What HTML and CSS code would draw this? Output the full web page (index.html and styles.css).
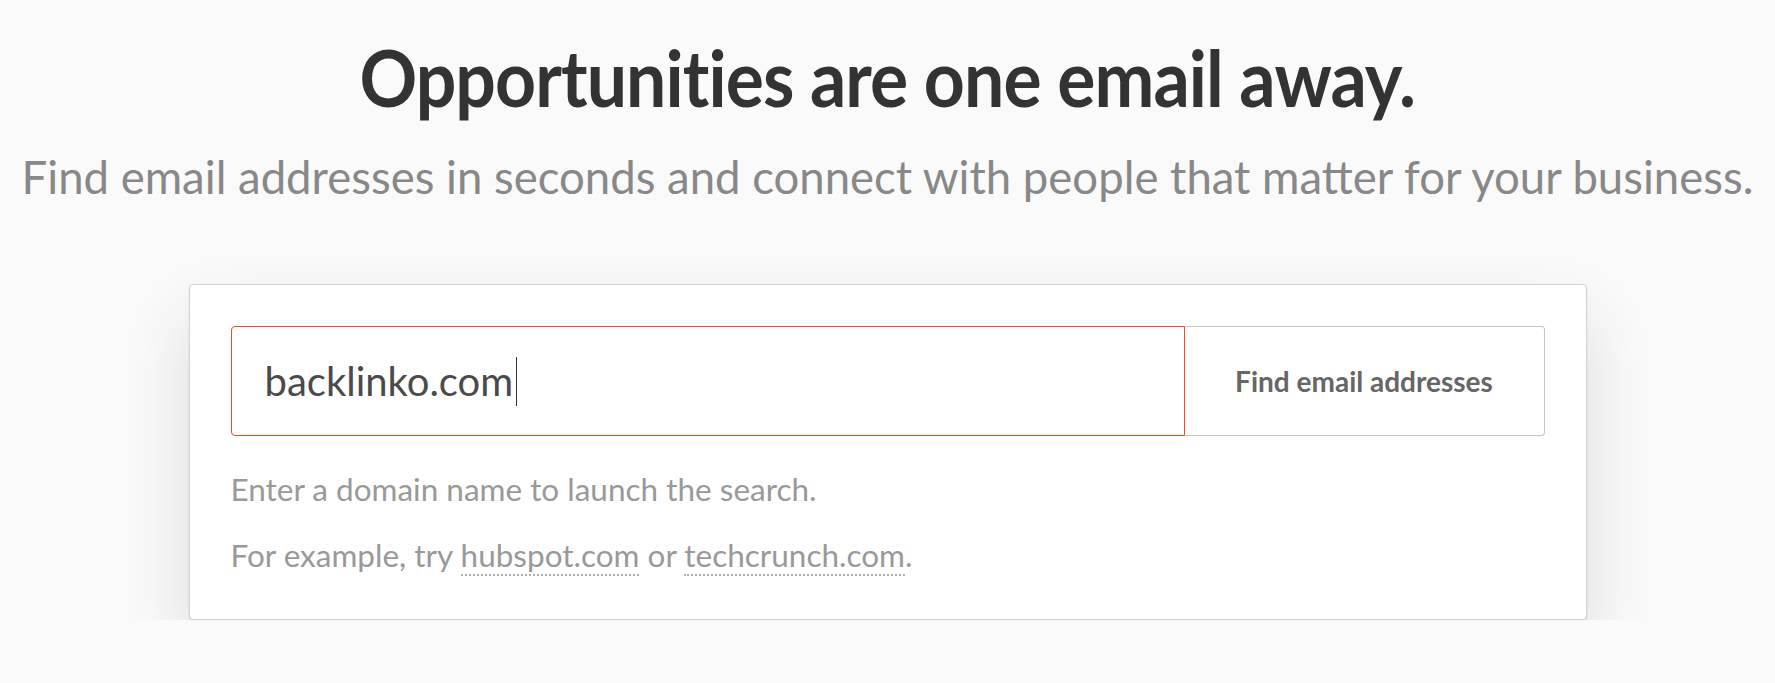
FILE: index.html
```html
<!DOCTYPE html>
<html lang="en">
<head>
<meta charset="utf-8">
<title>Find email addresses</title>
<link rel="stylesheet" href="styles.css">
</head>
<body>
<main class="hero">
  <h1 class="hero-title">Opportunities are one email away.</h1>
  <p class="hero-sub">Find email addresses in seconds and connect with people that matter for your business.</p>
  <section class="search-card">
    <form class="search-row">
      <div class="search-input"><span class="search-value">backlinko.com</span><span class="caret"></span></div>
      <button type="button" class="search-btn">Find email addresses</button>
    </form>
    <p class="hint hint-first">Enter a domain name to launch the search.</p>
    <p class="hint hint-second">For example, try <a class="example">hubspot.com</a> or <a class="example">techcrunch.com</a>.</p>
  </section>
</main>
</body>
</html>
```
FILE: styles.css
```css
html, body {
  margin: 0;
  padding: 0;
  background: #fafafa;
}
body {
  font-family: Lato, "Open Sans", sans-serif;
}
.hero {
  display: flex;
  flex-direction: column;
  align-items: center;
}
.hero-title {
  margin: 30px 0 0;
  font-size: 79px;
  line-height: 1.2;
  font-weight: 700;
  color: #333333;
  letter-spacing: -1px;
  white-space: nowrap;
  transform: scaleX(0.905);
}
.hero-sub {
  margin: 25px 0 0;
  font-size: 45.5px;
  line-height: 1.2;
  font-weight: 400;
  color: #888888;
  white-space: nowrap;
}
.search-card {
  box-sizing: border-box;
  width: 1398px;
  margin-top: 80px;
  padding: 41px 41px 44px;
  background: #ffffff;
  border: 1px solid #d2d2d2;
  border-radius: 4px;
  box-shadow: 0 1px 2px rgba(0, 0, 0, 0.1), 0 34px 70px rgba(0, 0, 0, 0.12);
}
.search-row {
  display: flex;
  height: 110px;
  margin: 0;
}
.search-input {
  flex: 1;
  display: flex;
  align-items: center;
  padding-left: 33px;
  border: 1px solid #f44d16;
  border-radius: 4px 0 0 4px;
  font-size: 40px;
  color: #4a4a4a;
}
.caret {
  display: inline-block;
  width: 1px;
  height: 49px;
  margin-left: 3px;
  background: #333;
}
.search-btn {
  width: 360px;
  background: #ffffff;
  border: 1px solid #c8c8c8;
  border-left: none;
  border-radius: 0 4px 4px 0;
  font-family: Lato, "Open Sans", sans-serif;
  font-weight: 700;
  font-size: 28px;
  color: #666666;
}
.hint {
  margin: 0;
  font-size: 31.5px;
  line-height: 1.2;
  color: #999999;
}
.hint-first {
  margin-top: 35px;
}
.hint-second {
  margin-top: 28px;
}
.example {
  color: #999999;
  text-decoration: none;
  border-bottom: 2px dotted #b0b0b0;
}
```
